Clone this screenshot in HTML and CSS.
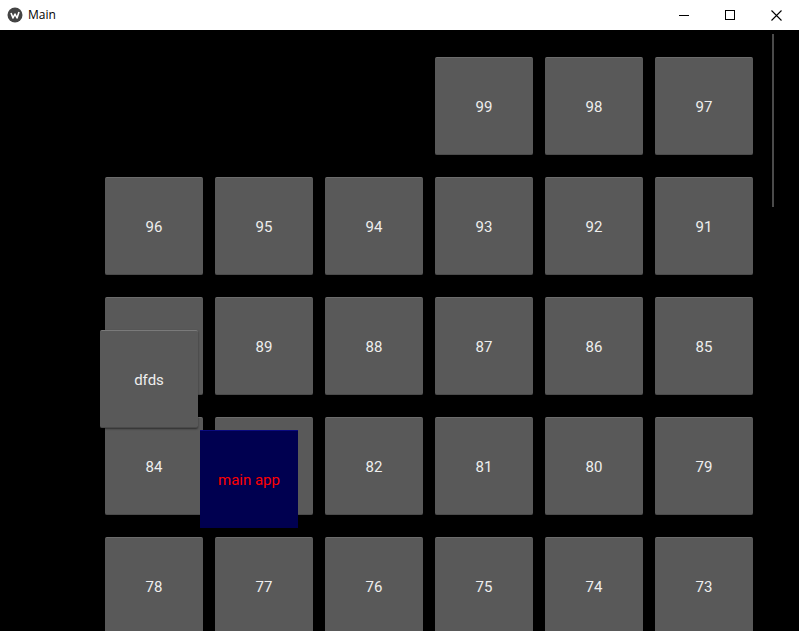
FILE: index.html
```html
<!DOCTYPE html>
<html>
<head>
<meta charset="utf-8">
<link rel="stylesheet" href="styles.css">
</head>
<body>
<div class="window">
  <div class="titlebar">
    <div class="title-left">
      <svg class="app-icon" width="16" height="16" viewBox="0 0 16 16">
        <circle cx="8" cy="8" r="7.5" fill="#444"/>
        <path d="M4 6 L6 11 L8 7 L10 11 L12 5" stroke="#fff" stroke-width="1.6" fill="none" stroke-linejoin="round"/>
      </svg>
      <span class="title-text">Main</span>
    </div>
    <div class="controls">
      <div class="ctl"><svg width="10" height="10" viewBox="0 0 10 10"><path d="M0 5.5 H10" stroke="#000" stroke-width="1"/></svg></div>
      <div class="ctl"><svg width="10" height="10" viewBox="0 0 10 10"><rect x="0.5" y="0.5" width="9" height="9" stroke="#000" stroke-width="1" fill="none"/></svg></div>
      <div class="ctl"><svg width="11" height="11" viewBox="0 0 11 11"><path d="M0.5 0.5 L10.5 10.5 M10.5 0.5 L0.5 10.5" stroke="#000" stroke-width="1.1"/></svg></div>
    </div>
  </div>
  <div class="content">
    <div class="grid">
      <div class="empty"></div><div class="empty"></div><div class="empty"></div>
      <div class="tile">99</div><div class="tile">98</div><div class="tile">97</div>
      <div class="tile">96</div><div class="tile">95</div><div class="tile">94</div>
      <div class="tile">93</div><div class="tile">92</div><div class="tile">91</div>
      <div class="tile">90</div><div class="tile">89</div><div class="tile">88</div>
      <div class="tile">87</div><div class="tile">86</div><div class="tile">85</div>
      <div class="tile">84</div><div class="tile">83</div><div class="tile">82</div>
      <div class="tile">81</div><div class="tile">80</div><div class="tile">79</div>
      <div class="tile">78</div><div class="tile">77</div><div class="tile">76</div>
      <div class="tile">75</div><div class="tile">74</div><div class="tile">73</div>
    </div>
    <div class="tile floating dfds">dfds</div>
    <div class="mainapp">main app</div>
    <div class="scrollbar"></div>
  </div>
</div>
</body>
</html>
```
FILE: styles.css
```css
html, body {
  margin: 0;
  padding: 0;
  background: #000;
}
.window {
  width: 799px;
  height: 631px;
  display: flex;
  flex-direction: column;
  overflow: hidden;
}
.titlebar {
  height: 30px;
  flex: none;
  background: #fff;
  display: flex;
  align-items: center;
  justify-content: space-between;
}
.title-left {
  display: flex;
  align-items: center;
  padding-left: 7px;
  gap: 5px;
}
.app-icon {
  display: block;
}
.title-text {
  font-family: "Open Sans", "Noto Sans", sans-serif;
  font-size: 12px;
  color: #000;
  margin-top: -1px;
}
.controls {
  display: flex;
  height: 30px;
}
.ctl {
  width: 46px;
  height: 30px;
  display: flex;
  align-items: center;
  justify-content: center;
}
.content {
  position: relative;
  flex: 1;
  background: #000;
  overflow: hidden;
}
.grid {
  display: grid;
  grid-template-columns: repeat(6, 98px);
  grid-auto-rows: 98px;
  column-gap: 12px;
  row-gap: 22px;
  padding-left: 105px;
  padding-top: 27px;
}
.tile {
  background: #595959;
  border-top: 1px solid #6c6c6c;
  border-bottom: 1px solid #4a4a4a;
  box-sizing: border-box;
  border-radius: 2px;
  display: flex;
  align-items: center;
  justify-content: center;
  padding-top: 2px;
  font-family: Roboto, "Liberation Sans", sans-serif;
  font-size: 15px;
  color: #eeeeee;
  width: 98px;
  height: 98px;
}
.floating {
  position: absolute;
}
.dfds {
  left: 100px;
  top: 300px;
  border-top-color: #7a7a7a;
  box-shadow: 0 1px 2px rgba(0,0,0,0.5);
}
.mainapp {
  position: absolute;
  left: 200px;
  top: 400px;
  width: 98px;
  height: 98px;
  background: #000050;
  border-top: 1px solid #0a0a80;
  box-sizing: border-box;
  display: flex;
  align-items: center;
  justify-content: center;
  font-family: Roboto, "Liberation Sans", sans-serif;
  font-size: 15px;
  color: #ff0000;
}
.scrollbar {
  position: absolute;
  left: 772px;
  top: 4px;
  width: 2px;
  height: 173px;
  background: #4a4a4a;
}
```
